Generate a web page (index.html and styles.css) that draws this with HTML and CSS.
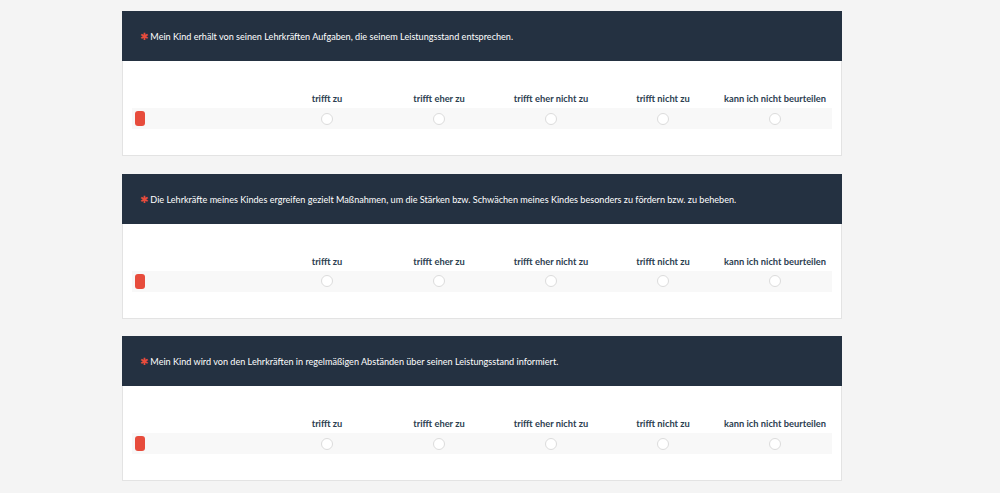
FILE: index.html
```html
<!DOCTYPE html>
<html>
    <head>
        <title>Fragebogen</title>
        <link rel="stylesheet" href="styles.css">
    </head>
    <body>
        <div class="survey">
            <div class="question">
                <div class="question-title"><span class="required">&#10033;</span> Mein Kind erhält von seinen Lehrkräften Aufgaben, die seinem Leistungsstand entsprechen.</div>
                <div class="question-body">
                    <div class="scale-head">
                        <span></span>
                        <span>trifft zu</span>
                        <span>trifft eher zu</span>
                        <span>trifft eher nicht zu</span>
                        <span>trifft nicht zu</span>
                        <span>kann ich nicht beurteilen</span>
                    </div>
                    <div class="scale-row">
                        <span class="marker"></span>
                        <span class="radio"></span>
                        <span class="radio"></span>
                        <span class="radio"></span>
                        <span class="radio"></span>
                        <span class="radio"></span>
                    </div>
                </div>
            </div>
            <div class="question">
                <div class="question-title"><span class="required">&#10033;</span> Die Lehrkräfte meines Kindes ergreifen gezielt Maßnahmen, um die Stärken bzw. Schwächen meines Kindes besonders zu fördern bzw. zu beheben.</div>
                <div class="question-body">
                    <div class="scale-head">
                        <span></span>
                        <span>trifft zu</span>
                        <span>trifft eher zu</span>
                        <span>trifft eher nicht zu</span>
                        <span>trifft nicht zu</span>
                        <span>kann ich nicht beurteilen</span>
                    </div>
                    <div class="scale-row">
                        <span class="marker"></span>
                        <span class="radio"></span>
                        <span class="radio"></span>
                        <span class="radio"></span>
                        <span class="radio"></span>
                        <span class="radio"></span>
                    </div>
                </div>
            </div>
            <div class="question">
                <div class="question-title"><span class="required">&#10033;</span> Mein Kind wird von den Lehrkräften in regelmäßigen Abständen über seinen Leistungsstand informiert.</div>
                <div class="question-body">
                    <div class="scale-head">
                        <span></span>
                        <span>trifft zu</span>
                        <span>trifft eher zu</span>
                        <span>trifft eher nicht zu</span>
                        <span>trifft nicht zu</span>
                        <span>kann ich nicht beurteilen</span>
                    </div>
                    <div class="scale-row">
                        <span class="marker"></span>
                        <span class="radio"></span>
                        <span class="radio"></span>
                        <span class="radio"></span>
                        <span class="radio"></span>
                        <span class="radio"></span>
                    </div>
                </div>
            </div>
        </div>
    </body>
</html>
```

FILE: styles.css
```css
body {
    margin: 0;
    background-color: #f4f4f4;
    font-family: Lato, "Liberation Sans", sans-serif;
}

.survey {
    padding-top: 11px;
    padding-left: 122px;
}

.question {
    width: 718px;
    margin-bottom: 17.5px;
    background-color: #ffffff;
    border: 1px solid #e3e3e3;
    border-top: none;
}

.question-title {
    height: 50px;
    margin: 0 -1px;
    padding-left: 18px;
    line-height: 50px;
    background-color: #243141;
    color: #ffffff;
    font-size: 9.1px;
}

.required {
    color: #e74c3c;
    font-size: 10px;
}

.question-body {
    padding: 31px 9px 26px;
}

.scale-head,
.scale-row {
    display: grid;
    grid-template-columns: 139px repeat(5, 112px);
    align-items: center;
}

.scale-head span {
    text-align: center;
    font-size: 9.3px;
    font-weight: bold;
    color: #2c3e50;
    line-height: 14px;
}

.scale-row {
    margin-top: 2px;
    height: 21px;
    background-color: #f8f8f8;
}

.marker {
    width: 10px;
    height: 15px;
    margin-left: 3px;
    border-radius: 3px;
    background-color: #e74c3c;
}

.radio {
    justify-self: center;
    width: 10px;
    height: 10px;
    border: 1px solid #dcdcdc;
    border-radius: 50%;
    background-color: #ffffff;
}
```
